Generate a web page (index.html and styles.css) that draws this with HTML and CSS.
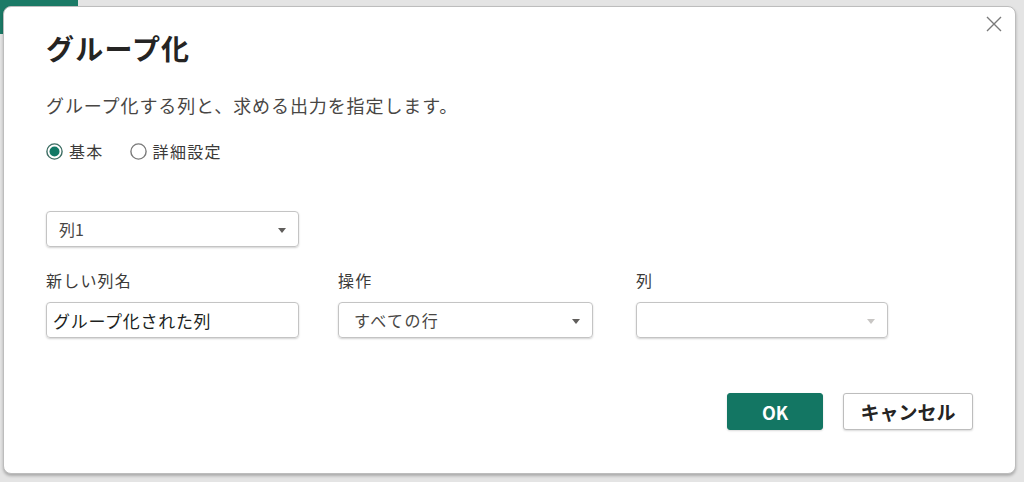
FILE: index.html
```html
<!DOCTYPE html>
<html lang="ja">
<head>
    <meta charset="UTF-8">
    <meta name="viewport" content="width=device-width, initial-scale=1.0">
    <title>グループ化</title>
    <link rel="stylesheet" href="styles.css">
</head>
<body>
    <div class="app-tab"></div>

    <div class="dialog">
        <button class="close" aria-label="閉じる">
            <svg width="16" height="16" viewBox="0 0 16 16">
                <path d="M1 1 L15 15 M15 1 L1 15" stroke="#7a7a7a" stroke-width="1.4" fill="none"/>
            </svg>
        </button>

        <h1 class="title">グループ化</h1>
        <p class="subtitle">グループ化する列と、求める出力を指定します。</p>

        <div class="radios">
            <label class="radio">
                <svg width="17" height="17" viewBox="0 0 17 17">
                    <circle cx="8.5" cy="8.5" r="7.6" fill="#fff" stroke="#3d6d63" stroke-width="1.4"/>
                    <circle cx="8.5" cy="8.5" r="5" fill="#117865"/>
                </svg>
                基本
            </label>
            <label class="radio">
                <svg width="17" height="17" viewBox="0 0 17 17">
                    <circle cx="8.5" cy="8.5" r="7.6" fill="#fff" stroke="#7a7a7a" stroke-width="1.4"/>
                </svg>
                詳細設定
            </label>
        </div>

        <div class="select group-col">
            <span class="value">列1</span>
            <span class="caret"></span>
        </div>

        <div class="fields">
            <div class="field">
                <div class="label">新しい列名</div>
                <div class="input w253">グループ化された列</div>
            </div>
            <div class="field">
                <div class="label">操作</div>
                <div class="select w255 wide-text">
                    <span class="value">すべての行</span>
                    <span class="caret"></span>
                </div>
            </div>
            <div class="field">
                <div class="label">列</div>
                <div class="select w252 disabled">
                    <span class="value"></span>
                    <span class="caret"></span>
                </div>
            </div>
        </div>

        <div class="actions">
            <button class="btn primary">OK</button>
            <button class="btn">キャンセル</button>
        </div>
    </div>
</body>
</html>
```

FILE: styles.css
```css
/* Page behind the dialog */
body {
    margin: 0;
    padding: 6px 0 0 3px;
    height: 482px;
    box-sizing: border-box;
    overflow: hidden;
    background: #e4e4e4;
    font-family: "Noto Sans CJK JP", "Noto Sans", sans-serif;
    color: #3b3a39;
    position: relative;
}

.app-tab {
    position: absolute;
    left: 0;
    top: 0;
    width: 78px;
    height: 34px;
    background: #1b7a66;
}

/* Dialog */
.dialog {
    position: relative;
    width: 1013px;
    height: 468px;
    box-sizing: border-box;
    background: #ffffff;
    border: 1px solid #bdbdbd;
    border-radius: 8px;
    box-shadow: 0 2px 3px rgba(0, 0, 0, 0.25);
    padding: 23px 42px 0 42px;
}

.close {
    position: absolute;
    top: 9px;
    right: 13px;
    width: 16px;
    height: 16px;
    padding: 0;
    border: none;
    background: none;
    line-height: 0;
}

.title {
    margin: 0;
    font-size: 28px;
    line-height: 36px;
    font-weight: bold;
    letter-spacing: 1.2px;
    color: #252423;
}

.subtitle {
    margin: 27px 0 0;
    font-size: 18px;
    line-height: 24px;
    letter-spacing: 0.9px;
    color: #484644;
}

.radios {
    display: flex;
    gap: 26px;
    margin-top: 22px;
    font-size: 16px;
    line-height: 24px;
    letter-spacing: 1.3px;
    color: #3b3a39;
}

.radio {
    display: flex;
    align-items: center;
    gap: 6px;
}

/* Inputs */
.select,
.input {
    box-sizing: border-box;
    height: 36px;
    border: 1px solid #c4c4c4;
    border-radius: 4px;
    box-shadow: 0 1px 2px rgba(0, 0, 0, 0.18);
    display: flex;
    align-items: center;
    font-size: 16px;
}

.select {
    justify-content: space-between;
    padding: 0 12px 0 12px;
    color: #484644;
}

.wide-text {
    padding-left: 15px;
    letter-spacing: 1.4px;
}

.input {
    padding: 0 6px;
    font-size: 17px;
    letter-spacing: 0.7px;
    color: #201f1e;
}

.group-col {
    width: 253px;
    margin-top: 48px;
}

.caret {
    width: 0;
    height: 0;
    border-left: 4.5px solid transparent;
    border-right: 4.5px solid transparent;
    border-top: 5px solid #605e5c;
    margin-top: 2px;
}

.disabled .caret {
    border-top-color: #c8c6c4;
}

.w253 { width: 253px; }
.w255 { width: 255px; }
.w252 { width: 252px; }

.fields {
    display: grid;
    grid-template-columns: 292px 298px 252px;
    margin-top: 22px;
}

.label {
    font-size: 16px;
    line-height: 22px;
    letter-spacing: 1.2px;
    color: #3b3a39;
    margin-bottom: 11px;
}

/* Buttons */
.actions {
    display: flex;
    justify-content: flex-end;
    gap: 20px;
    margin-top: 55px;
}

.btn {
    height: 37px;
    width: 130px;
    box-sizing: border-box;
    border: 1px solid #bdbdbd;
    border-radius: 3px;
    background: #ffffff;
    font-family: "Noto Sans CJK JP", "Noto Sans", sans-serif;
    font-size: 19px;
    font-weight: bold;
    color: #252423;
    box-shadow: 0 1px 2px rgba(0, 0, 0, 0.15);
    padding: 0;
}

.btn.primary {
    width: 96px;
    background: #137663;
    border-color: #137663;
    color: #ffffff;
    font-size: 18px;
}
```
